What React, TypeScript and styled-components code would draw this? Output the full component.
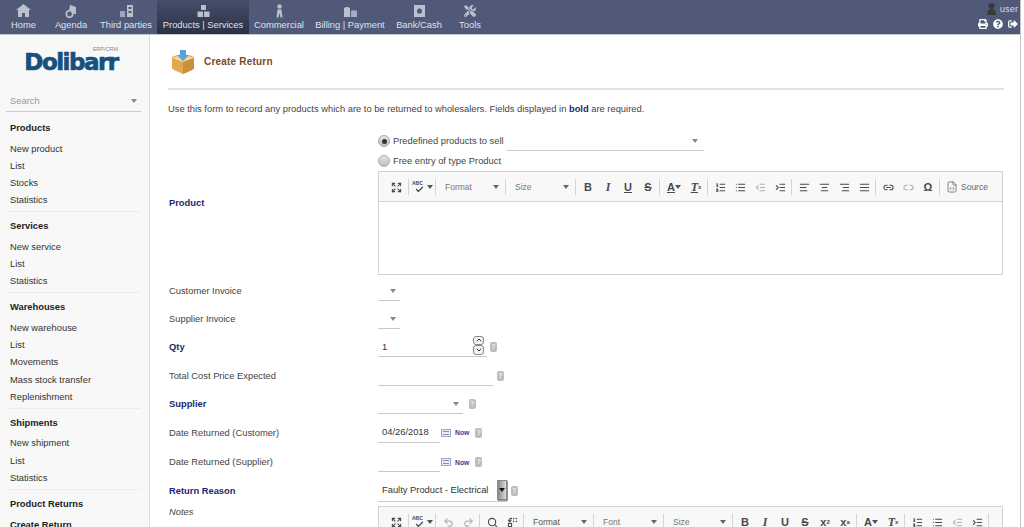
import React from "react";
import styled, { createGlobalStyle } from "styled-components";
import { FaTools, FaPrint, FaQuestionCircle, FaSignOutAlt } from "react-icons/fa";
import { Expand, ListOrdered, List, Outdent, Indent, AlignLeft, AlignCenter, AlignRight, AlignJustify, Link2, Unlink2, FileCode, Undo2, Redo2, Search as SearchGlyph, Replace, Check, ChevronUp, ChevronDown } from "lucide-react";

const Global = createGlobalStyle`
  html, body { margin: 0; padding: 0; height: 527px; overflow: hidden; background: #fff; }
  body { font-family: "Liberation Sans", Arial, sans-serif; font-size: 9.35px; color: #444; }
  * { box-sizing: border-box; }
`;

const Page = styled.div`
  width: 1021px; height: 527px; display: flex; flex-direction: column; overflow: hidden; position: relative;
  border-right: 1px solid #c4c4c4;
`;
const TopBar = styled.header`
  height: 35px; flex: none; background: #505a78; border-bottom: 1px solid #c5c8d2; display: flex; justify-content: space-between;
`;
const Nav = styled.nav`display: flex;`;
const NavItem = styled.div<{ $w: number; $active?: boolean }>`
  width: ${p => p.$w}px; height: 34px; display: flex; flex-direction: column; align-items: center; justify-content: flex-start;
  padding-top: 4px; color: #dfe2ea; font-size: 9.35px; white-space: nowrap;
  background: ${p => (p.$active ? "linear-gradient(#454e6a, #2b3144)" : "transparent")};
`;
const NavIcon = styled.div`
  height: 14px; display: flex; align-items: center; justify-content: center; color: #bcc0cd; margin-bottom: 2px;
`;
const UserBox = styled.div`
  display: flex; flex-direction: column; align-items: flex-end; padding: 3px 2px 0 0; color: #d5d8e2; gap: 3px;
`;
const UserLine = styled.div`display: flex; align-items: center; gap: 4px; font-size: 9.35px; height: 12px;`;
const TopTools = styled.div`display: flex; align-items: center; gap: 5px; color: #fff; height: 12px;`;

const Body = styled.div`flex: 1; display: flex; min-height: 0;`;
const Side = styled.aside`
  width: 150px; flex: none; background: #f8f8f8; border-right: 1px solid #dcdcdc; overflow: hidden; padding: 0 8px 0 6px;
`;
const Logo = styled.div`
  height: 54px; display: flex; justify-content: center; align-items: flex-start; position: relative; padding: 18px 5px 0 0;
`;
const LogoText = styled.div`
  font-family: "DejaVu Sans", sans-serif; font-weight: 700; font-size: 23px; line-height: 18px; letter-spacing: -1.5px;
  color: #17507f; -webkit-text-stroke: 0.7px #17507f;
`;
const LogoTag = styled.span`
  position: absolute; right: 23px; top: 11px; font-size: 5.5px; line-height: 7px; color: #888;
`;
const SearchBox = styled.div`
  height: 21px; margin-bottom: 8px; display: flex; justify-content: space-between; align-items: center; border-bottom: 1px solid #ccc;
  padding: 4px 4px 4px 4px; color: #999; margin-top: 2px;
`;
const Arrow = styled.span<{ $c?: string }>`
  width: 0; height: 0; flex: none; border-left: 3px solid transparent; border-right: 3px solid transparent; border-top: 4px solid ${p => p.$c || "#888"};
`;
const Section = styled.section`
  padding: 0 0 2px 4px; margin-bottom: 6px; border-bottom: 1px solid #ececec;
`;
const SectionTitle = styled.div`
  font-weight: 700; color: #222; line-height: 17px; margin-bottom: 3.5px;
`;
const SideLink = styled.div<{ $current?: boolean }>`
  line-height: 17.2px; color: ${p => (p.$current ? "#222" : "#333")}; white-space: nowrap;
  font-weight: ${p => (p.$current ? 700 : 400)};
`;

const Main = styled.main`flex: 1; min-width: 0; padding: 0 16px 0 18px; overflow: hidden;`;
const TitleRow = styled.div`
  height: 55px; display: flex; align-items: center; gap: 8px; border-bottom: 2px solid #e4e4e4; padding: 0 0 0 2px; margin-bottom: 13px;
`;
const PageTitle = styled.h1`
  margin: 0; font-size: 10px; font-weight: 700; color: #7a4b1e; letter-spacing: 0.2px;
`;
const Intro = styled.p`margin: 0 0 14px; line-height: 12px; color: #444;`;
const Strong = styled.b`color: #1f1f70;`;

const Row = styled.div<{ $h: number; $top?: boolean }>`
  display: flex; height: ${p => p.$h}px; align-items: ${p => (p.$top ? "flex-start" : "center")};
`;
const Label = styled.div<{ $req?: boolean; $italic?: boolean }>`
  width: 210px; flex: none; padding-left: 1px;
  font-weight: ${p => (p.$req ? 700 : 400)}; color: ${p => (p.$req ? "#1f1f70" : "#444")};
  font-style: ${p => (p.$italic ? "italic" : "normal")};
  padding-top: ${p => (p.$italic ? "3px" : "0")};
`;
const Value = styled.div`flex: 1; min-width: 0; display: flex; align-items: center;`;
const Stack = styled.div<{ $mt?: number }>`flex: 1; display: flex; flex-direction: column; min-width: 0; margin-top: ${p => p.$mt || 0}px;`;
const RadioRow = styled.div`display: flex; align-items: center; height: 20px; color: #444;`;
const Radio = styled.span<{ $on?: boolean }>`
  width: 12px; height: 12px; border-radius: 50%; flex: none; margin-right: 3px; display: inline-flex; align-items: center; justify-content: center;
  border: 1px solid #aaa; background: linear-gradient(#e6e6e6, #bdbdbd);
  &::after { content: ""; width: 5px; height: 5px; border-radius: 50%; background: ${p => (p.$on ? "#333" : "transparent")}; }
`;
const Underlined = styled.div<{ $w: number }>`
  width: ${p => p.$w}px; height: 20px; flex: none; border-bottom: 1px solid #c8c8c8; display: flex; align-items: center; justify-content: space-between; padding: 0 4px; color: #333;
`;
const PredefSelect = styled(Underlined)`margin-left: 3px; padding-right: 6px; justify-content: flex-end;`;
const Help = styled.span<{ $ml: number }>`
  width: 7px; height: 10px; flex: none; margin-left: ${p => p.$ml}px; background: #bdbdbd; border-radius: 2px; color: #f0f0f0; font-size: 7px; font-weight: 700; line-height: 10px; text-align: center;
`;
const Spin = styled.span`
  display: flex; flex-direction: column; width: 11px; height: 19px; color: #333; margin-top: -3px; margin-right: -1px;
`;
const SpinPart = styled.span`
  height: 9.5px; border: 1px solid #888; border-radius: 3px; background: #f2f2f2; display: flex; align-items: center; justify-content: center;
`;
const Cal = styled.span`
  width: 10px; height: 8px; margin-left: 1px; border: 1px solid #a4a4cc; background: #ecebf6; flex: none;
  background-image: linear-gradient(#8a8ac0, #8a8ac0), linear-gradient(#8a8ac0, #8a8ac0);
  background-size: 6px 1px; background-repeat: no-repeat; background-position: 1px 1px, 1px 4px;
`;
const NowLink = styled.span`margin-left: 4px; font-size: 6.8px; font-weight: 700; color: #3a3a96;`;
const NativeSelect = styled.div`
  width: 129px; height: 22px; flex: none; display: flex; align-items: center; justify-content: space-between; padding-left: 4px; border-bottom: 1px solid #c8c8c8; color: #333;
`;
const NativeBtn = styled.span`
  width: 10px; height: 20px; background: linear-gradient(90deg, #888, #ddd); border: 1px solid #888; display: flex; align-items: center; justify-content: center;
  box-shadow: 1px 1px 0 #999;
`;

const Editor = styled.div<{ $h?: number }>`
  width: 625px; border: 1px solid #d1d1d1; flex: none; ${p => (p.$h ? `height:${p.$h}px;` : "")} background: #fff;
`;
const Toolbar = styled.div`
  height: 30px; background: #f8f8f8; border-bottom: 1px solid #d1d1d1; display: flex; align-items: center; padding: 1px 0 0 4px; color: #474747;
`;
const Group = styled.div<{ $last?: boolean }>`
  display: flex; align-items: center; height: 16px; padding: 0 1px 0 2px; flex: none;
  border-right: ${p => (p.$last ? "none" : "1px solid #d4d4d4")};
`;
const Btn = styled.span<{ $w?: number; $dim?: boolean }>`
  width: ${p => p.$w || 20}px; height: 16px; display: flex; align-items: center; justify-content: center; flex: none; font-size: 11px; font-weight: 700;
  font-family: "Liberation Sans", sans-serif; color: #4a4a4a; opacity: ${p => (p.$dim ? 0.4 : 1)};
`;
const Italic = styled.span`font-style: italic; font-family: "Liberation Serif", serif; font-size: 12px;`;
const Under = styled.span`text-decoration: underline;`;
const Strike = styled.span`text-decoration: line-through;`;
const Sub = styled.sub`font-size: 6px; line-height: 0;`;
const Sup = styled.sup`font-size: 6px; line-height: 0;`;
const Combo = styled.div<{ $w: number; $color?: string }>`
  width: ${p => p.$w}px; display: flex; justify-content: space-between; align-items: center; padding: 0 5px 0 7px; font-size: 8.5px; color: ${p => p.$color || "#777"};
`;
const SourceBtn = styled.span`display: flex; align-items: center; gap: 3px; padding-left: 4px; color: #666; font-size: 8.5px;`;
const Spell = styled.span`
  display: inline-block; position: relative; width: 14px; height: 14px; font-size: 5px; font-weight: 700; color: #474747; line-height: 7px; margin-right: 1px;
`;
const SpellMark = styled.span`position: absolute; left: 3px; top: 5px; display: flex;`;
const EditorBody = styled.div<{ $h: number }>`height: ${p => p.$h}px;`;

const ic = { size: 11, strokeWidth: 2.4 } as const;

function Box() {
  return (
    <svg width="26" height="26" viewBox="0 0 26 26">
      <path d="M2 9 Q2 8 4 7 L13 5 L22 7 Q24 8 24 9 L24 19 Q24 20 22 21 L13 25 L4 21 Q2 20 2 19Z" fill="#e0a94d" />
      <path d="M2 9 L13 13 L24 9 L13 5Z" fill="#f3d595" />
      <path d="M13 13 L24 9 L24 19 Q24 20 22 21 L13 25Z" fill="#c98f3b" />
      <path d="M10 1 h6 v5 h3 l-6 6 l-6 -6 h3z" fill="#5aa0dc" />
    </svg>
  );
}
const Small = ({ children }: { children: React.ReactNode }) => (
  <svg width="15" height="14" viewBox="0 0 15 14" fill="currentColor">{children}</svg>
);
const items = [
  { t: "Home", w: 47, i: <Small><path d="M7.5 0 L15 6 H13 V13 H9 V9 H6 V13 H2 V6 H0Z" /></Small> },
  { t: "Agenda", w: 48, i: <Small><path d="M6 1 L12 3 V10 H9 A4 4 0 0 0 5 6Z" /><circle cx="5.5" cy="10" r="3.2" fill="none" stroke="currentColor" strokeWidth="1.6" /></Small> },
  { t: "Third parties", w: 62, i: <Small><path d="M1 7h5v6H1z" opacity=".75" /><path fillRule="evenodd" d="M8 1h6v12H8zM9.5 3v2h3V3zM9.5 7v2h3V7z" /></Small> },
  { t: "Products | Services", w: 92, active: true, i: <Small><rect x="5" y="1" width="5" height="5" /><rect x="1.5" y="7.5" width="5.5" height="5.5" /><rect x="8" y="7.5" width="5.5" height="5.5" /></Small> },
  { t: "Commercial", w: 60, i: <Small><circle cx="7.5" cy="2.5" r="2.2" /><path d="M5.5 5.5h4l1 8H8.5L7.5 9 6.5 13.5H4.5z" /></Small> },
  { t: "Billing | Payment", w: 82, i: <Small><path d="M1 4 Q4 2 7 4 V13 H1z" /><path d="M8 7 Q11 5.5 14 7 V13 H8z" opacity=".8" /></Small> },
  { t: "Bank/Cash", w: 56, i: <Small><path fillRule="evenodd" d="M2 1h11v12H2zM7.5 4.5a2.6 2.6 0 1 0 .01 0z" /></Small> },
  { t: "Tools", w: 46, i: <FaTools size={12} /> },
];
const sections = [
  { t: "Products", l: ["New product", "List", "Stocks", "Statistics"] },
  { t: "Services", l: ["New service", "List", "Statistics"] },
  { t: "Warehouses", l: ["New warehouse", "List", "Movements", "Mass stock transfer", "Replenishment"] },
  { t: "Shipments", l: ["New shipment", "List", "Statistics"] },
  { t: "Product Returns", l: ["Create Return"] },
];
const TxBtn = () => <Btn><Italic><Under>T</Under></Italic><Sub>x</Sub></Btn>;
const SpellBtn = () => (
  <Btn $w={23}>
    <Spell>ABC<SpellMark><Check size={9} strokeWidth={3.5} /></SpellMark></Spell><Arrow $c="#555" />
  </Btn>
);
const Lists = () => (
  <Group>
    <Btn><ListOrdered {...ic} /></Btn><Btn><List {...ic} /></Btn><Btn $dim><Outdent {...ic} /></Btn><Btn><Indent {...ic} /></Btn>
  </Group>
);
const UserGlyph = () => (
  <svg width="9" height="12" viewBox="0 0 9 12" fill="#3a3a38"><circle cx="4.5" cy="3" r="3" /><path d="M0 12 Q0 6 4.5 6 Q9 6 9 12z" /></svg>
);

export default function App() {
  return (
    <Page>
      <Global />
      <TopBar>
        <Nav>
          {items.map(n => (
            <NavItem key={n.t} $w={n.w} $active={n.active}>
              <NavIcon>{n.i}</NavIcon>
              {n.t}
            </NavItem>
          ))}
        </Nav>
        <UserBox>
          <UserLine><UserGlyph />user</UserLine>
          <TopTools><FaPrint size={10} /><FaQuestionCircle size={10} /><FaSignOutAlt size={10} /></TopTools>
        </UserBox>
      </TopBar>
      <Body>
        <Side>
          <Logo>
            <LogoText>Dolibarr</LogoText>
            <LogoTag>ERP/CRM</LogoTag>
          </Logo>
          <SearchBox>Search<Arrow /></SearchBox>
          {sections.map(s => (
            <Section key={s.t}>
              <SectionTitle>{s.t}</SectionTitle>
              {s.l.map(x => <SideLink key={x} $current={x === "Create Return"}>{x}</SideLink>)}
            </Section>
          ))}
        </Side>
        <Main>
          <TitleRow><Box /><PageTitle>Create Return</PageTitle></TitleRow>
          <Intro>Use this form to record any products which are to be returned to wholesalers. Fields displayed in <Strong>bold</Strong> are required.</Intro>
          <Row $h={148}>
            <Label $req>Product</Label>
            <Stack>
              <RadioRow><Radio $on />Predefined products to sell<PredefSelect $w={197}><Arrow /></PredefSelect></RadioRow>
              <RadioRow><Radio />Free entry of type Product</RadioRow>
              <Editor $h={104}>
                <Toolbar>
                  <Group><Btn $w={22}><Expand {...ic} /></Btn></Group>
                  <Group><SpellBtn /></Group>
                  <Group><Combo $w={66}>Format<Arrow $c="#666" /></Combo></Group>
                  <Group><Combo $w={66}>Size<Arrow $c="#666" /></Combo></Group>
                  <Group><Btn>B</Btn><Btn><Italic>I</Italic></Btn><Btn><Under>U</Under></Btn><Btn><Strike>S</Strike></Btn></Group>
                  <Group><Btn $w={24}><Under>A</Under><Arrow $c="#555" /></Btn><TxBtn /></Group>
                  <Lists />
                  <Group><Btn><AlignLeft {...ic} /></Btn><Btn><AlignCenter {...ic} /></Btn><Btn><AlignRight {...ic} /></Btn><Btn><AlignJustify {...ic} /></Btn></Group>
                  <Group><Btn><Link2 {...ic} /></Btn><Btn $dim><Unlink2 {...ic} /></Btn><Btn>Ω</Btn></Group>
                  <Group $last><SourceBtn><FileCode size={12} strokeWidth={1.6} />Source</SourceBtn></Group>
                </Toolbar>
                <EditorBody $h={72} />
              </Editor>
            </Stack>
          </Row>
          <Row $h={28}><Label>Customer Invoice</Label><Value><Underlined $w={22}><span /><Arrow /></Underlined></Value></Row>
          <Row $h={28}><Label>Supplier Invoice</Label><Value><Underlined $w={22}><span /><Arrow /></Underlined></Value></Row>
          <Row $h={28}><Label $req>Qty</Label><Value><Underlined $w={109}>1<Spin><SpinPart><ChevronUp size={8} strokeWidth={3} /></SpinPart><SpinPart><ChevronDown size={8} strokeWidth={3} /></SpinPart></Spin></Underlined><Help $ml={3}>?</Help></Value></Row>
          <Row $h={29}><Label>Total Cost Price Expected</Label><Value><Underlined $w={115} /><Help $ml={4}>?</Help></Value></Row>
          <Row $h={28}><Label $req>Supplier</Label><Value><Underlined $w={85}><span /><Arrow /></Underlined><Help $ml={6}>?</Help></Value></Row>
          <Row $h={29}><Label>Date Returned (Customer)</Label><Value><Underlined $w={62}>04/26/2018</Underlined><Cal /><NowLink>Now</NowLink><Help $ml={6}>?</Help></Value></Row>
          <Row $h={30}><Label>Date Returned (Supplier)</Label><Value><Underlined $w={62} /><Cal /><NowLink>Now</NowLink><Help $ml={6}>?</Help></Value></Row>
          <Row $h={27}><Label $req>Return Reason</Label><Value><NativeSelect>Faulty Product - Electrical<NativeBtn><Arrow $c="#111" /></NativeBtn></NativeSelect><Help $ml={4}>?</Help></Value></Row>
          <Row $h={60} $top>
            <Label $italic>Notes</Label>
            <Stack $mt={2}>
              <Editor>
                <Toolbar>
                  <Group><Btn $w={22}><Expand {...ic} /></Btn></Group>
                  <Group><SpellBtn /></Group>
                  <Group><Btn $dim><Undo2 {...ic} /></Btn><Btn $dim><Redo2 {...ic} /></Btn></Group>
                  <Group><Btn><SearchGlyph {...ic} /></Btn><Btn><Replace {...ic} /></Btn></Group>
                  <Group><Combo $w={66} $color="#555">Format<Arrow $c="#666" /></Combo></Group>
                  <Group><Combo $w={66}>Font<Arrow $c="#666" /></Combo></Group>
                  <Group><Combo $w={65}>Size<Arrow $c="#666" /></Combo></Group>
                  <Group><Btn>B</Btn><Btn><Italic>I</Italic></Btn><Btn><Under>U</Under></Btn><Btn><Strike>S</Strike></Btn><Btn>x<Sub>2</Sub></Btn><Btn>x<Sup>a</Sup></Btn></Group>
                  <Group><Btn $w={24}><Under>A</Under><Arrow $c="#555" /></Btn><TxBtn /></Group>
                  <Lists />
                </Toolbar>
              </Editor>
            </Stack>
          </Row>
        </Main>
      </Body>
    </Page>
  );
}
